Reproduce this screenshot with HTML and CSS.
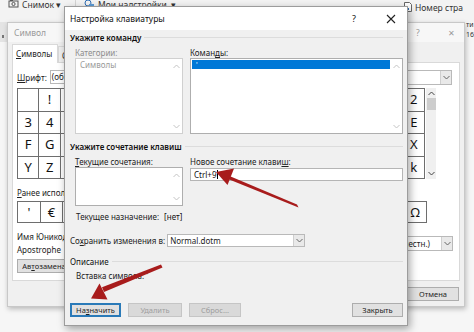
FILE: index.html
```html
<!DOCTYPE html>
<html lang="ru">
<head>
<meta charset="utf-8">
<link rel="stylesheet" href="styles.css">
</head>
<body>
<div class="desk">
  <div class="ribbon">
    <div class="rb-item rb-snap">
      <svg class="rb-ico" width="11" height="10" viewBox="0 0 11 10"><rect x="1" y="2" width="9" height="6" fill="none" stroke="#555" stroke-width="1"/><circle cx="5.5" cy="5" r="1.6" fill="none" stroke="#555"/><rect x="2" y="0.5" width="3" height="1.5" fill="#555"/></svg>
      <span>Снимок ▾</span>
    </div>
    <div class="rb-sep"></div>
    <div class="rb-item rb-add">
      <svg class="rb-ico" width="11" height="10" viewBox="0 0 11 10"><circle cx="4" cy="4" r="3" fill="none" stroke="#2d6db5"/><rect x="5" y="5" width="5" height="4" fill="#5d9bd5"/></svg>
      <span>Мои надстройки &nbsp;▾</span>
    </div>
    <div class="rb-item rb-num">
      <svg class="rb-ico" width="8" height="10" viewBox="0 0 8 10"><path d="M0.5 0.5h5l2 2v7h-7z" fill="#fff" stroke="#666"/><rect x="2" y="6" width="3" height="2" fill="#2d6db5"/></svg>
      <span>Номер стра</span>
    </div>
  </div>
  <div class="doc-edge"><span class="de1">ти</span><span class="de2">16</span></div>
  <div class="left-ruler"><span class="tick"></span></div>

  <!-- Background dialog: Символ -->
  <div class="win sym">
    <div class="sym-title">
      <span class="sym-name">Символ</span>
      <span class="sym-help">?</span>
      <span class="sym-close">✕</span>
    </div>
    <div class="sym-body">
      <div class="tabs"><div class="tab"><u>С</u>имволы</div><div class="tab tab-off">Специальные знаки</div></div>
      <div class="panel">
        <div class="font-row">
          <span class="lbl"><u>Ш</u>рифт:</span>
          <span class="font-input">(обычный текст)</span>
          <span class="grow"></span>
          <span class="lbl">Набор:</span>
          <span class="combo subset"><span class="combo-text">основная латиница</span><span class="dd"><svg width="7" height="5" viewBox="0 0 7 5"><path d="M0.5 1l3 3 3-3" fill="none" stroke="#666"/></svg></span></span>
        </div>
        <div class="grid-row">
          <div class="sgrid">
            <span> </span><span>!</span><span>"</span><span>#</span><span>$</span><span>%</span><span>&amp;</span><span>'</span><span>(</span><span>)</span><span>*</span><span>+</span><span>,</span><span>-</span><span>.</span><span>/</span><span>0</span><span>1</span><span>2</span>
            <span>3</span><span>4</span><span>5</span><span>6</span><span>7</span><span>8</span><span>9</span><span>:</span><span>;</span><span>&lt;</span><span>=</span><span>&gt;</span><span>?</span><span>@</span><span>A</span><span>B</span><span>C</span><span>D</span><span>E</span>
            <span>F</span><span>G</span><span>H</span><span>I</span><span>J</span><span>K</span><span>L</span><span>M</span><span>N</span><span>O</span><span>P</span><span>Q</span><span>R</span><span>S</span><span>T</span><span>U</span><span>V</span><span>W</span><span>X</span>
            <span>Y</span><span>Z</span><span>[</span><span>\</span><span>]</span><span>^</span><span>_</span><span>`</span><span>a</span><span>b</span><span>c</span><span>d</span><span>e</span><span>f</span><span>g</span><span>h</span><span>i</span><span>j</span><span>k</span>
          </div>
          <div class="vscroll">
            <svg width="7" height="5" viewBox="0 0 7 5"><path d="M0.5 4l3-3 3 3" fill="none" stroke="#444"/></svg>
            <span class="thumb"></span>
            <span class="grow"></span>
            <svg width="7" height="5" viewBox="0 0 7 5"><path d="M0.5 1l3 3 3-3" fill="none" stroke="#444"/></svg>
          </div>
        </div>
        <div class="recent-lbl"><u>Р</u>анее использовавшиеся символы:</div>
        <div class="recent">
          <span>'</span><span>€</span><span>£</span><span>¥</span><span>©</span><span>®</span><span>™</span><span>±</span><span>≠</span><span>≤</span><span>≥</span><span>÷</span><span>×</span><span>∞</span><span>µ</span><span>α</span><span>β</span><span>Ω</span>
        </div>
        <div class="uni-row">
          <div class="uni-left">
            <div>Имя Юникод:</div>
            <div>Apostrophe</div>
          </div>
          <span class="grow"></span>
          <span class="combo code"><span class="combo-text">Юникод (шестн.)</span><span class="dd"><svg width="7" height="5" viewBox="0 0 7 5"><path d="M0.5 1l3 3 3-3" fill="none" stroke="#666"/></svg></span></span>
        </div>
        <div class="sym-btns"><span class="btn">Ав<u>т</u>озамена...</span><span class="btn">Сочетание клавиш...</span></div>
      </div>
      <div class="sym-foot"><span class="btn">Вставить</span><span class="btn">Отмена</span></div>
    </div>
  </div>

  <!-- Front dialog -->
  <div class="win kbd">
    <div class="kbd-title">
      <span class="kbd-name">Настройка клавиатуры</span>
      <span class="kbd-help">?</span>
      <span class="kbd-close"><svg width="10" height="10" viewBox="0 0 10 10"><path d="M1 1l8 8M9 1l-8 8" stroke="#222" stroke-width="1.1"/></svg></span>
    </div>
    <div class="kbd-body">
      <div class="hdr"><span>Укажите команду</span><i></i></div>
      <div class="two">
        <div class="col-l">
          <div class="lbl dis">Категории:</div>
          <div class="list big dis-box">
            <div class="list-items"><div class="item-dis">Символы</div></div>
            <div class="lscroll"><svg width="7" height="5" viewBox="0 0 7 5"><path d="M0.5 4l3-3 3 3" fill="none" stroke="#c4c4c4"/></svg><svg width="7" height="5" viewBox="0 0 7 5"><path d="M0.5 1l3 3 3-3" fill="none" stroke="#c4c4c4"/></svg></div>
          </div>
        </div>
        <div class="col-r">
          <div class="lbl">Коман<u>д</u>ы:</div>
          <div class="list big">
            <div class="list-items"><div class="item-sel">'</div></div>
            <div class="lscroll"><svg width="7" height="5" viewBox="0 0 7 5"><path d="M0.5 4l3-3 3 3" fill="none" stroke="#c4c4c4"/></svg><svg width="7" height="5" viewBox="0 0 7 5"><path d="M0.5 1l3 3 3-3" fill="none" stroke="#c4c4c4"/></svg></div>
          </div>
        </div>
      </div>
      <div class="hdr hdr2"><span>Укажите сочетание клавиш</span><i></i></div>
      <div class="two two2">
        <div class="col-l">
          <div class="lbl"><u>Т</u>екущие сочетания:</div>
          <div class="list small">
            <div class="list-items"></div>
            <div class="lscroll"><svg width="7" height="5" viewBox="0 0 7 5"><path d="M0.5 4l3-3 3 3" fill="none" stroke="#c4c4c4"/></svg><svg width="7" height="5" viewBox="0 0 7 5"><path d="M0.5 1l3 3 3-3" fill="none" stroke="#c4c4c4"/></svg></div>
          </div>
        </div>
        <div class="col-r">
          <div class="lbl">Новое сочетание клави<u>ш</u>:</div>
          <div class="keybox">Ctrl+9<span class="caret"></span></div>
        </div>
      </div>
      <div class="assign"><span>Текущее назначение:</span><span class="none">[нет]</span></div>
      <div class="save">
        <span>Со<u>х</u>ранить изменения в:</span>
        <span class="combo normal"><span class="combo-text">Normal.dotm</span><span class="dd"><svg width="7" height="5" viewBox="0 0 7 5"><path d="M0.5 1l3 3 3-3" fill="none" stroke="#666"/></svg></span></span>
      </div>
      <div class="hdr hdr3"><span>Описание</span><i></i></div>
      <div class="desc">Вставка символа: '</div>
      <div class="kbd-btns">
        <span class="btn focus">На<u>з</u>начить</span>
        <span class="btn dis">Удалить</span>
        <span class="btn dis">Сброс...</span>
        <span class="grow"></span>
        <span class="btn">Закрыть</span>
      </div>
    </div>
  </div>

  <svg class="arrows" width="474" height="332" viewBox="0 0 474 332">
    <polygon points="297,204.5 298.5,207.5 228,179 226.5,174.8" fill="#a81c1c"/>
    <polygon points="216,172 234,168.5 227.5,185" fill="#a81c1c"/>
    <polygon points="161,264.5 162.5,267.5 104,292 102,287.3" fill="#a81c1c"/>
    <polygon points="91,298.5 99.5,283.5 107.5,299.5" fill="#a81c1c"/>
  </svg>
</div>
</body>
</html>
```
FILE: styles.css
```css
* { box-sizing: border-box; }
html, body { margin: 0; padding: 0; }
body {
  width: 474px; height: 332px; overflow: hidden;
  font-family: "Noto Sans", "Open Sans", sans-serif;
  font-size: 8px; line-height: 11px; color: #222;
}
u { text-decoration: underline; text-underline-offset: 1px; }
.grow { flex: 1; }

.desk { position: relative; width: 474px; height: 332px; background: #f6f6f6; overflow: hidden; }

/* ribbon */
.ribbon {
  height: 22px; background: #f3f3f3; display: flex; align-items: flex-start;
  padding-left: 8px; color: #333; font-size: 8.5px;
}
.rb-item { display: flex; align-items: center; gap: 3px; margin-top: -3px; height: 14px; }
.rb-ico { flex: none; }
.rb-snap { width: 60px; }
.rb-sep { width: 1px; height: 12px; background: #d4d4d4; margin: 0 8px 0 7px; }
.rb-add { width: 300px; }
.rb-num { margin-left: 20px; margin-top: 0; }

.doc-edge { position: absolute; left: 466px; top: 20px; display: flex; flex-direction: column; font-size: 7px; line-height: 10px; color: #333; }
.left-ruler { position: absolute; left: 0; top: 22px; width: 7px; height: 20px; background: #e4e4e4; }
.left-ruler .tick { position: absolute; left: 2px; top: 13px; width: 2px; height: 3px; background: #777; }

/* windows */
.win { position: absolute; display: flex; flex-direction: column; }

.sym {
  left: 7px; top: 22px; width: 458px; height: 285px; z-index: 1;
  background: #f0f0f0; border: 1px solid #c8c8c8;
  box-shadow: 1px 2px 5px rgba(0,0,0,0.25);
}
.sym-title { height: 19px; display: flex; align-items: center; padding-left: 6px; background: #f7f7f7; color: #9a9a9a; font-size: 8.5px; }
.sym-name { flex: 1; }
.sym-help { width: 32px; }
.sym-close { width: 16px; font-size: 8px; }
.sym-body { flex: 1; padding: 2px 4px 0 4px; display: flex; flex-direction: column; }
.tabs { display: flex; height: 18px; }
.tab { width: 46px; background: #fff; border: 1px solid #d9d9d9; border-bottom: none; padding: 3px 0 0 3px; font-size: 8px; color: #222; position: relative; z-index: 1; height: 19px; white-space: nowrap; overflow: hidden; }
.tab-off { width: 90px; background: #f0f0f0; margin-top: 2px; height: 16px; }
.panel {
  height: 219px; background: #fff; border: 1px solid #d9d9d9;
  padding: 6px 4px 0 4px; display: flex; flex-direction: column;
}
.font-row { display: flex; align-items: center; height: 16px; gap: 3px; }
.font-input { width: 120px; height: 14px; border: 1px solid #b9b9b9; padding-left: 1px; line-height: 12px; }
.combo { display: flex; align-items: center; background: #fff; border: 1px solid #b9b9b9; height: 15px; }
.combo-text { flex: 1; padding-left: 2px; overflow: hidden; white-space: nowrap; }
.dd { width: 11px; height: 13px; display: flex; align-items: center; justify-content: center; background: #e9e9e9; border-left: 1px solid #cfcfcf; }
.subset { width: 140px; margin-right: 3px; }
.grid-row { display: flex; margin-top: 3px; height: 91px; }
.sgrid {
  width: 408px; display: grid; grid-template-columns: repeat(19, 1fr); grid-template-rows: repeat(4, 1fr);
  border-top: 1px solid #6e6e6e; border-left: 1px solid #6e6e6e;
}
.sgrid span, .recent span {
  border-right: 1px solid #6e6e6e; border-bottom: 1px solid #6e6e6e;
  display: flex; align-items: center; justify-content: center;
  font-size: 13px; color: #111; font-family: "Noto Sans", sans-serif;
}
.vscroll { width: 10px; margin-left: 1px; display: flex; flex-direction: column; align-items: center; background: #f0f0f0; padding: 3px 0 3px; }
.thumb { width: 9px; height: 12px; background: #cdcdcd; margin-top: 2px; }
.recent-lbl { margin-top: 8px; height: 12px; }
.recent {
  margin-top: 2px; width: 410px; height: 22px; display: grid; grid-template-columns: repeat(18, 1fr);
  border-top: 1px solid #6e6e6e; border-left: 1px solid #6e6e6e;
}
.uni-row { display: flex; margin-top: 7px; height: 29px; }
.uni-left { line-height: 13px; }
.code { width: 110px; margin-right: 2px; margin-top: 6px; }
.code .combo-text { text-align: right; padding-right: 11px; }
.sym-btns { display: flex; gap: 6px; margin-top: 0; }
.btn {
  display: inline-flex; align-items: center; justify-content: center;
  height: 15px; background: #e1e1e1; border: 1px solid #adadad; color: #222; font-size: 7.5px; padding: 0 4px;
}
.sym-btns .btn:first-child { width: 60px; height: 14px; }
.sym-btns .btn + .btn { width: 90px; height: 14px; }
.sym-foot { display: flex; justify-content: flex-end; gap: 6px; padding: 6px 1px 0 0; }
.sym-foot .btn { width: 52px; height: 14px; }

/* front dialog */
.kbd {
  left: 64px; top: 6px; width: 344px; height: 320px; z-index: 2;
  background: #f0f0f0; border: 1px solid #9c9c9c;
  box-shadow: 2px 3px 8px rgba(0,0,0,0.35);
}
.kbd-title { height: 23px; background: #fff; display: flex; align-items: center; padding-left: 5px; color: #111; font-size: 8.5px; }
.kbd-name { flex: 1; }
.kbd-help { width: 34px; font-size: 9px; }
.kbd-close { width: 21px; display: flex; align-items: center; }
.kbd-body { flex: 1; display: flex; flex-direction: column; padding: 2px 4px 8px 5px; }
.hdr { display: flex; align-items: center; gap: 3px; height: 11px; font-weight: 600; color: #111; }
.hdr i { flex: 1; height: 1px; background: #dcdcdc; }
.two { display: flex; gap: 7px; padding-left: 5px; margin-top: 4px; }
.col-l { width: 108px; }
.col-r { width: 213px; }
.lbl { height: 11px; }
.dis { color: #8d8d8d; }
.list { background: #fff; border: 1px solid #aeaeae; display: flex; }
.dis-box { border-color: #d0d0d0; }
.list.big { height: 76px; }
.list.small { height: 39px; margin-top: 0; }
.list-items { flex: 1; padding: 1px 0 0 1px; }
.item-dis { color: #999; padding-left: 3px; line-height: 10px; }
.item-sel { background: #0078d7; color: #fff; height: 9px; line-height: 9px; padding-left: 4px; font-size: 7px; }
.lscroll { width: 12px; display: flex; flex-direction: column; align-items: center; justify-content: space-between; padding: 5px 0 4px; }
.hdr2 { margin-top: 7px; }
.keybox { height: 13px; margin-top: 1px; background: #fff; border: 1px solid #b5b5b5; padding-left: 3px; line-height: 11px; display: flex; align-items: center; color: #111; }
.caret { width: 1px; height: 9px; background: #000; margin-left: 1px; }
.assign { margin-top: 5px; padding-left: 6px; display: flex; gap: 5px; height: 11px; }
.none { color: #111; }
.save { margin-top: 12px; display: flex; align-items: center; gap: 2px; height: 13px; }
.normal { width: 138px; height: 13px; }
.normal .dd { height: 11px; }
.hdr3 { margin-top: 9px; font-weight: 400; }
.desc { margin-top: 3px; padding-left: 6px; height: 11px; }
.kbd-btns { margin-top: auto; display: flex; gap: 7px; }
.kbd-btns .btn { width: 51px; height: 14px; }
.kbd-btns .btn.dis { width: 54px; background: #d9d9d9; border-color: #c5c5c5; color: #9e9e9e; }
.kbd-btns .btn.dis + .btn.dis { width: 52px; }
.kbd-btns .btn.focus { border: 2px solid #2a7ab8; }

.arrows { position: absolute; left: 0; top: 0; z-index: 3; }
```
